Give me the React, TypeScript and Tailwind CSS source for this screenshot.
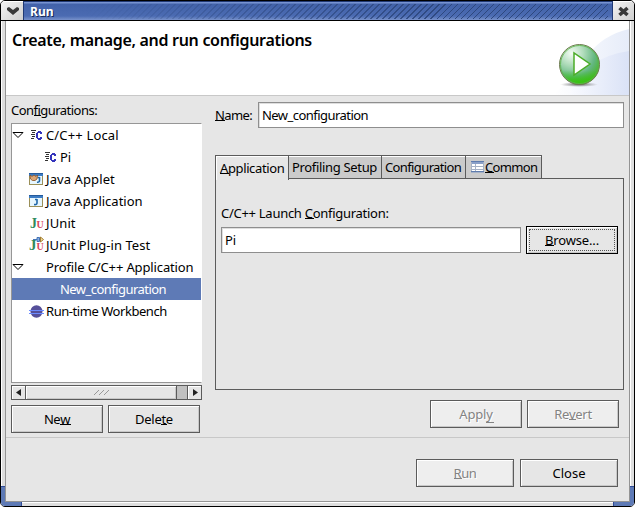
import React from 'react';

type Kids = { children?: React.ReactNode };

function U({ children, k = 'bottom-[2px]' }: Kids & { k?: string }) {
  return (
    <span className="relative inline-block">
      {children}
      <span className={`absolute left-0 -right-px h-px bg-current ${k}`} />
    </span>
  );
}

function CIcon() {
  return (
    <svg width="13" height="12" viewBox="0 0 13 12" shapeRendering="crispEdges">
      <path d="M1 1.5h5M2 3.5h3M1 5.5h4M2 7.5h3M1 9.5h3" stroke="#333" />
      <path d="M8 2h3v1h1v2h-2v-1h-2v5h2v-1h2v2h-1v1h-3v-1h-1v-1h-1v-5h1v-1h1z" fill="#3434bc" />
    </svg>
  );
}

function JavaIcon({ applet = false }: { applet?: boolean }) {
  return (
    <svg className="-ml-[2px]" width="14" height="12" viewBox="0 0 14 12">
      <rect x=".5" y=".5" width="13" height="11" fill="#e6f6ff" stroke="#9a8f58" />
      <path d="M0 0h14v3H0z" fill="#3c7cc4" />
      <path d="M0 .5h14" stroke="#245a9c" />
      <path d={applet ? 'M10.5 4v3.500q0 2-2.500 1.700M8.500 4.500h2' : 'M8 4v4q0 2-3 1.500M6 4.500h2'} fill="none" stroke="#2067a8" strokeWidth="1.600" />
      {applet && <path d="M1 2l2 1.500L5 2l2 1.500L8.500 2 8 6 6 7.500H3.500L1.500 6z" fill="#dba574" stroke="#8a4f20" strokeWidth=".8" />}
    </svg>
  );
}

function JUnitIcon({ plug = false }: { plug?: boolean }) {
  return (
    <svg className="shrink-0" width="18" height="18" viewBox="0 0 18 18">
      <g fontFamily="Liberation Serif, serif" fontWeight="bold">
        <text x={plug ? 1 : 2} y="14" fontSize={plug ? 15 : 14} fill="#2f8a5c">J</text>
        <text x="8.500" y="14" fontSize="10" fill="#d8485c">U</text>
      </g>
      {plug && (
        <g>
          <path d="M5 3.500h4M9 1.500h2.500v4H9z" stroke="#4573b5" fill="#85aee0" />
          <path d="M12.500 1l3 2.500-3 2.500z" fill="#f3dc9a" stroke="#9a7426" strokeWidth=".9" />
        </g>
      )}
    </svg>
  );
}

function Arrow() {
  return (
    <svg width="12" height="7" viewBox="0 0 12 7">
      <path d="M1 .5h10L6 5.500z" fill="#fff" stroke="#000" />
    </svg>
  );
}

function Row({ arrow, icon, label, indent = false, selected = false, spacing = '' }: { arrow?: boolean; icon?: React.ReactNode; label: React.ReactNode; indent?: boolean; selected?: boolean; spacing?: string }) {
  return (
    <div className={`flex h-[22px] w-[189px] items-center ${selected ? 'bg-[#5e7ab6] text-white' : ''}`}>
      <div className={`w-[15px] shrink-0 ${indent ? 'mr-[14px]' : ''}`}>{arrow && <Arrow />}</div>
      <div className="flex w-[19px] shrink-0 items-center justify-center">{icon}</div>
      <span className={spacing}>{label}</span>
    </div>
  );
}

function Button({ children, disabled = false, className }: Kids & { disabled?: boolean; className: string }) {
  return (
    <div className={`flex h-7 items-center justify-center border border-[#5b5b5b] ${disabled ? 'bg-[#eeeeee] text-[#838383] [text-shadow:1px_1px_#fff]' : 'bg-[#e6e6e6]'} shadow-[inset_1px_1px_#fff,inset_-1px_-1px_#c8c8c8] ${className}`}>
      {children}
    </div>
  );
}

function Tab({ children, className }: Kids & { className: string }) {
  return <div className={`flex h-6 items-center border border-l-0 border-[#5b5b5b] bg-[#cbcbcb] pl-[3px] shadow-[inset_0_1px_#fff] ${className}`}>{children}</div>;
}

function PlayBanner() {
  return (
    <svg width="90" height="74" viewBox="0 0 90 74">
      <defs>
        <linearGradient id="a" x1="0" x2="1"><stop stopColor="#fff" /><stop offset="1" stopColor="#e6ecf9" /></linearGradient>
        <linearGradient id="b" x1="0" x2="1"><stop stopColor="#fafbff" /><stop offset="1" stopColor="#dae2f6" /></linearGradient>
        <radialGradient id="g" cx=".3" cy=".22" r=".85"><stop stopColor="#f4fbf4" /><stop offset=".35" stopColor="#b0dcbb" /><stop offset=".7" stopColor="#62b680" /><stop offset="1" stopColor="#45b51e" /></radialGradient>
        <linearGradient id="h" x1="0" y1="0" x2="0" y2="1"><stop offset=".65" stopColor="#36c010" stopOpacity="0" /><stop offset="1" stopColor="#35c50c" /></linearGradient>
        <radialGradient id="s"><stop stopColor="#555" /><stop offset="1" stopColor="#888" stopOpacity="0" /></radialGradient>
      </defs>
      <path d="M15 74Q35 55 49 34 64 14 90 8V74z" fill="url(#a)" />
      <path d="M30 74Q46 36 90 30V74z" fill="url(#b)" />
      <ellipse cx="40" cy="63.500" rx="19" ry="2.500" fill="url(#s)" />
      <circle cx="40.500" cy="43.500" r="20" fill="url(#g)" stroke="#6f7a50" strokeWidth="1" />
      <circle cx="40.500" cy="43.500" r="19" fill="url(#h)" stroke="#5cb548" strokeWidth=".8" />
      <path d="M35 32v22l16-11z" fill="#fff" stroke="#4cad29" strokeWidth="1.500" />
    </svg>
  );
}

export default function App() {
  return (
    <div className="relative flex h-[507px] w-[635px] flex-col overflow-hidden rounded-[5px] border border-black bg-[#e6e6e6] font-['Noto_Sans','Open_Sans',sans-serif] text-[13px] leading-[16px] whitespace-pre text-black">
      <header className="flex h-5 shrink-0 border-b border-black">
        <div className="flex w-[22px] items-center justify-center border-t border-white bg-[linear-gradient(135deg,#f2f2f2,#cfcfcf)]">
          <svg className="ml-px" width="14" height="10" viewBox="0 0 14 10"><path d="M1 2l2-1 4 3 4-3 2 1v2L7 9 1 4z" fill="#393939" /></svg>
        </div>
        <div className="flex flex-1 items-center border-x border-t border-[#203975] bg-[linear-gradient(180deg,#7793d1_0_1px,#4262a9_2px,#4b6bb2_14px,#7992cb)]">
          <span className="ml-[6px] mt-[2px] w-[28px] font-['Open_Sans',sans-serif] text-[12px] font-bold text-white [text-shadow:1px_1px_#162956]">Run</span>
          <div className="ml-7 mr-1 h-[15px] flex-1 bg-[repeating-linear-gradient(135deg,transparent_0_3.1px,#2e487f_3.1px_4.25px)] [mask-image:linear-gradient(90deg,transparent,#000_70%)]" />
        </div>
        <div className="flex w-[21px] items-center justify-center border-t border-white bg-[linear-gradient(135deg,#f2f2f2,#cfcfcf)]">
          <svg width="11" height="11" viewBox="0 0 11 11"><path d="M1.500 2l8 7M9.500 2l-8 7" stroke="#393939" strokeWidth="3.600" /></svg>
        </div>
      </header>

      <div className="flex min-h-0 flex-1">
        <div className="flex w-1 shrink-0 items-end border-l border-white bg-[#dedede]"><div className="-ml-px h-4 w-1 shrink-0 border-t border-[#2f4a96] bg-[#5e7ab6]" /></div>
        <main className="flex min-w-0 flex-1 flex-col border-x border-b border-[#949494]">
          <div className="flex h-[75px] shrink-0 justify-between border-b border-[#c8c8c8] bg-white">
            <h1 className="ml-[6px] mt-[9px] text-[16px] leading-5 font-semibold tracking-[-0.3px]">Create, manage, and run configurations</h1>
            <PlayBanner />
          </div>

          <div className="flex h-[342px] shrink-0 border-b border-[#c8c8c8]">
            <section className="ml-[5px] w-[191px]">
              <div className="mt-[6px] h-[21px] tracking-[-0.53px]">Con<U>fi</U>gurations:</div>
              <div className="h-[260px] w-[191px] border border-[#969696] border-r-white bg-white">
                <Row arrow icon={<CIcon />} label="C/C++ Local" spacing="tracking-[0.15px]" />
                <Row indent icon={<CIcon />} label="Pi" />
                <Row icon={<JavaIcon applet />} label="Java Applet" spacing="tracking-[0.1px]" />
                <Row icon={<JavaIcon />} label="Java Application" />
                <Row icon={<JUnitIcon />} label="JUnit" spacing="tracking-[0.1px]" />
                <Row icon={<JUnitIcon plug />} label="JUnit Plug-in Test" spacing="tracking-[0.05px]" />
                <Row arrow label="Profile C/C++ Application" spacing="tracking-[-0.13px]" />
                <Row indent selected label="New_configuration" spacing="tracking-[-0.54px]" />
                <Row icon={<svg width="15" height="13"><ellipse cx="7.500" cy="6.500" rx="6" ry="6.200" fill="#56509a" /><path d="M0 5.500h15M0 8.500h15" stroke="#6c8cff" /></svg>} label="Run-time Workbench" spacing="tracking-[-0.45px]" />
              </div>
              <div className="mt-[2px] flex h-[15px] border border-[#5b5b5b] bg-[#c1c1c1]">
                <div className="flex w-[14px] items-center justify-center border-r border-[#5b5b5b] bg-[#e6e6e6] shadow-[inset_1px_1px_#fff]"><svg width="6" height="7"><path d="M5 0v7L0 3.500z" fill="#222" /></svg></div>
                <div className="flex w-[151px] items-center justify-center border-r border-[#5b5b5b] bg-[#e6e6e6] shadow-[inset_1px_1px_#fff,inset_-1px_-1px_#c8c8c8]"><svg width="17" height="7"><path d="M1 6l5-5M6 6l5-5M11 6l5-5" stroke="#999" /></svg></div>
                <div className="flex-1" />
                <div className="flex w-[14px] items-center justify-center border-l border-[#5b5b5b] bg-[#e6e6e6] shadow-[inset_1px_1px_#fff]"><svg width="6" height="7"><path d="M1 0v7l5-3.500z" fill="#222" /></svg></div>
              </div>
              <div className="mt-[5px] flex gap-[5px]">
                <Button className="w-[92px]"><span className="tracking-[-0.4px]">Ne<U>w</U></span></Button>
                <Button className="w-[92px]"><span className="tracking-[-0.3px]">Dele<U>t</U>e</span></Button>
              </div>
            </section>

            <section className="ml-[13px] w-[409px]">
              <div className="mt-[6px] flex h-[26px] items-center">
                <span className="w-[43px] tracking-[-0.6px]"><U>N</U>ame:</span>
                <div className="flex h-[26px] flex-1 items-center border border-[#8e8e8e] bg-white pl-[3px] tracking-[-0.54px] shadow-[inset_1px_1px_#dedede]">New_configuration</div>
              </div>
              <div className="mt-[26px] flex h-[25px] items-end">
                <div className="z-10 -mb-px flex h-[25px] w-[74px] items-center border border-b-0 border-[#5b5b5b] bg-[#e6e6e6] pl-1 tracking-[-0.38px] shadow-[inset_1px_1px_#fff]"><U>A</U>pplication</div>
                <Tab className="w-[93px] tracking-[-0.33px]">Profiling Setup</Tab>
                <Tab className="w-[84px] tracking-[-0.62px]">Configuration</Tab>
                <Tab className="w-[76px] tracking-[-0.65px]">
                  <svg className="mx-[1px] ml-[2px] shrink-0" width="13" height="12" shapeRendering="crispEdges"><path d="M0 0h13v11H0z" fill="#fff" /><path d="M0 0h13v3H0z" fill="#8aa0c8" /><path d="M.5 0v11h12V0M0 5.500h13M0 8.500h13M4.500 3v8" stroke="#a6b2c6" fill="none" /><path d="M0 .5h13M0 10.500h13" stroke="#5f7cae" /></svg>
                  <U>C</U>ommon
                </Tab>
              </div>
              <div className="-mt-px h-[212px] border border-[#5b5b5b] px-[5px] pt-[26px]">
                <div className="tracking-[-0.28px]">C/C++ Launch <U>C</U>onfiguration:</div>
                <div className="mt-[5px] flex items-center justify-between">
                  <div className="flex h-[26px] w-[300px] items-center border border-[#8e8e8e] bg-white pl-[3px] shadow-[inset_1px_1px_#dedede]">Pi</div>
                  <div className="flex h-7 w-[92px] border border-black bg-[#e6e6e6] p-[2px] shadow-[inset_1px_1px_#fff,inset_-1px_-1px_#c8c8c8]">
                    <div className="flex flex-1 items-center justify-center border border-dotted border-[#555] tracking-[-0.15px]"><U>B</U>rowse...</div>
                  </div>
                </div>
              </div>
              <div className="mt-[10px] mr-[5px] flex justify-end gap-[5px]">
                <Button disabled className="w-[92px]"><span className="tracking-[-0.2px]">Appl<U k="-bottom-px">y</U></span></Button>
                <Button disabled className="w-[92px]"><span className="tracking-[-0.3px]">Re<U>v</U>ert</span></Button>
              </div>
            </section>
          </div>

          <footer className="flex flex-1 items-start justify-end gap-[6px] pt-[21px] pr-[11px]">
            <Button disabled className="w-[98px]"><span className="tracking-[-0.4px]"><U>R</U>un</span></Button>
            <Button className="w-[98px]"><span>Close</span></Button>
          </footer>
        </main>
        <div className="flex w-1 shrink-0 items-end border-l border-white bg-[#dedede]"><div className="-ml-px h-4 w-1 shrink-0 border-t border-[#2f4a96] bg-[#5e7ab6]" /></div>
      </div>
      <div className="flex h-1 shrink-0 justify-between border-t border-white bg-[#dedede]"><div className="-mt-px h-1 w-[21px] border-r border-[#2f4a96] bg-[#5e7ab6]" /><div className="-mt-px h-1 w-[21px] border-l border-[#2f4a96] bg-[#5e7ab6]" /></div>
    </div>
  );
}
